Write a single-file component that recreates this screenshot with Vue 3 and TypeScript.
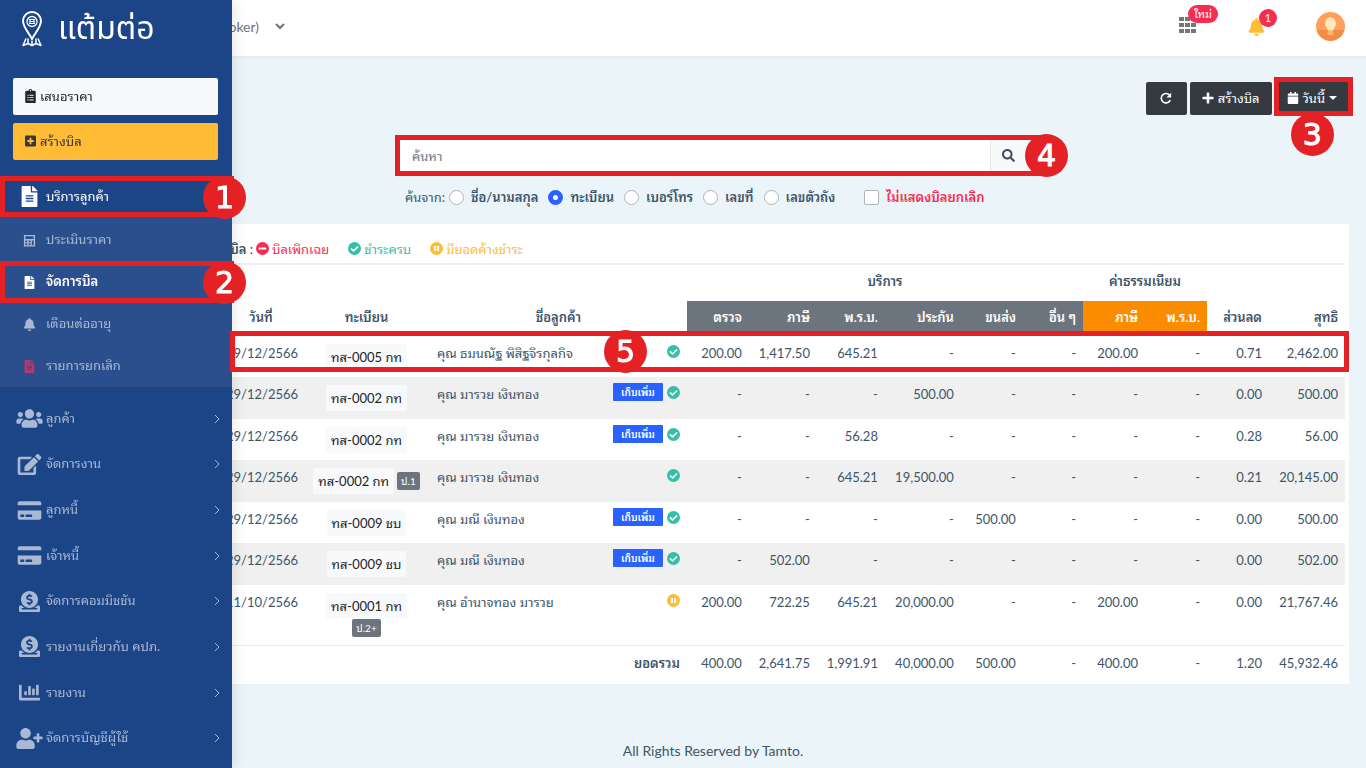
<script setup lang="ts">
import { ref } from 'vue'

interface Icon { box: string; d: string }

const icons: Record<string, Icon> = {
  file: { box: '0 0 384 512', d: 'M224 136V0H24C10.7 0 0 10.7 0 24v464c0 13.3 10.7 24 24 24h336c13.3 0 24-10.7 24-24V160H248c-13.2 0-24-10.8-24-24zm64 236c0 6.6-5.4 12-12 12H108c-6.6 0-12-5.4-12-12v-8c0-6.6 5.4-12 12-12h168c6.6 0 12 5.4 12 12v8zm0-64c0 6.6-5.4 12-12 12H108c-6.6 0-12-5.4-12-12v-8c0-6.6 5.4-12 12-12h168c6.6 0 12 5.4 12 12v8zm0-72v8c0 6.6-5.4 12-12 12H108c-6.6 0-12-5.4-12-12v-8c0-6.6 5.4-12 12-12h168c6.6 0 12 5.4 12 12zm96-114.1v6.1H256V0h6.1c6.4 0 12.5 2.5 17 7l97.9 98c4.5 4.5 7 10.6 7 16.9z' },
  bell: { box: '0 0 448 512', d: 'M224 512c35.32 0 63.97-28.65 63.97-64H160.03c0 35.35 28.65 64 63.97 64zm215.39-149.71c-19.32-20.76-55.47-51.99-55.47-154.29 0-77.7-54.48-139.9-127.94-155.16V32c0-17.67-14.32-32-31.98-32s-31.98 14.33-31.98 32v20.84C118.56 68.1 64.08 130.3 64.08 208c0 102.3-36.15 133.53-55.47 154.29-6 6.45-8.66 14.16-8.61 21.71.11 16.4 12.98 32 32.1 32h383.8c19.12 0 32-15.6 32.1-32 .05-7.55-2.61-15.27-8.61-21.71z' },
  users: { box: '0 0 640 512', d: 'M96 224c35.3 0 64-28.7 64-64s-28.7-64-64-64-64 28.7-64 64 28.7 64 64 64zm448 0c35.3 0 64-28.7 64-64s-28.7-64-64-64-64 28.7-64 64 28.7 64 64 64zm32 32h-64c-17.6 0-33.5 7.1-45.1 18.6 40.3 22.1 68.9 62 75.1 109.4h66c17.7 0 32-14.3 32-32v-32c0-35.3-28.7-64-64-64zm-256 0c61.9 0 112-50.1 112-112S381.9 32 320 32 208 82.1 208 144s50.1 112 112 112zm76.8 32h-8.3c-20.8 10-43.9 16-68.5 16s-47.6-6-68.5-16h-8.3C179.6 288 128 339.6 128 403.2V432c0 26.5 21.5 48 48 48h288c26.5 0 48-21.5 48-48v-28.8c0-63.6-51.6-115.2-115.2-115.2zm-223.7-13.4C161.5 263.1 145.6 256 128 256H64c-35.3 0-64 28.7-64 64v32c0 17.7 14.3 32 32 32h65.9c6.3-47.4 34.9-87.3 75.2-109.4z' },
  userPlus: { box: '0 0 640 512', d: 'M624 208h-64v-64c0-8.8-7.2-16-16-16h-32c-8.8 0-16 7.2-16 16v64h-64c-8.8 0-16 7.2-16 16v32c0 8.8 7.2 16 16 16h64v64c0 8.8 7.2 16 16 16h32c8.8 0 16-7.2 16-16v-64h64c8.8 0 16-7.2 16-16v-32c0-8.8-7.2-16-16-16zm-400 48c70.7 0 128-57.3 128-128S294.7 0 224 0 96 57.3 96 128s57.3 128 128 128zm89.6 32h-16.7c-22.2 10.2-46.9 16-72.9 16s-50.6-5.8-72.9-16h-16.7C60.2 288 0 348.2 0 422.4V464c0 26.5 21.5 48 48 48h352c26.5 0 48-21.5 48-48v-41.6c0-74.2-60.2-134.4-134.4-134.4z' },
  edit: { box: '0 0 576 512', d: 'M402.6 83.2l90.2 90.2c3.8 3.8 3.8 10 0 13.8L274.4 405.6l-92.8 10.3c-12.4 1.4-22.9-9.1-21.5-21.5l10.3-92.8L388.8 83.2c3.8-3.8 10-3.8 13.8 0zm162-22.9l-48.8-48.8c-15.2-15.2-39.9-15.2-55.2 0l-35.4 35.4c-3.8 3.8-3.8 10 0 13.8l90.2 90.2c3.8 3.8 10 3.8 13.8 0l35.4-35.4c15.2-15.3 15.2-40 0-55.2zM384 346.2V448H64V128h229.8c3.2 0 6.2-1.3 8.5-3.5l40-40c7.6-7.6 2.2-20.5-8.5-20.5H48C21.5 64 0 85.5 0 112v352c0 26.5 21.5 48 48 48h352c26.5 0 48-21.5 48-48V306.2c0-10.7-12.9-16-20.5-8.5l-40 40c-2.2 2.3-3.5 5.3-3.5 8.5z' },
  card: { box: '0 0 576 512', d: 'M0 432c0 26.5 21.5 48 48 48h480c26.5 0 48-21.5 48-48V256H0v176zm192-68c0-6.6 5.4-12 12-12h136c6.6 0 12 5.4 12 12v40c0 6.6-5.4 12-12 12H204c-6.6 0-12-5.4-12-12v-40zm-128 0c0-6.6 5.4-12 12-12h72c6.6 0 12 5.4 12 12v40c0 6.6-5.4 12-12 12H76c-6.6 0-12-5.4-12-12v-40zM576 80v48H0V80c0-26.5 21.5-48 48-48h480c26.5 0 48 21.5 48 48z' },
  donate: { box: '0 0 512 512', d: 'M256 416c114.9 0 208-93.1 208-208S370.9 0 256 0 48 93.1 48 208s93.1 208 208 208zM233.8 97.4V80.6c0-9.2 7.4-16.6 16.6-16.6h11.1c9.2 0 16.6 7.4 16.6 16.6v17c15.5.8 30.5 6.1 43 15.4 5.6 4.1 6.2 12.3 1.2 17.1L306 145.6c-3.8 3.7-9.5 3.8-14 1-5.4-3.4-11.4-5.1-17.8-5.1h-38.9c-9 0-16.3 8.2-16.3 18.3 0 8.2 5 15.5 12.1 17.6l62.3 18.7c25.7 7.7 43.7 32.4 43.7 60.1 0 34-26.4 61.5-59.1 62.4v16.8c0 9.2-7.4 16.6-16.6 16.6h-11.1c-9.2 0-16.6-7.4-16.6-16.6v-17c-15.5-.8-30.5-6.1-43-15.4-5.6-4.1-6.2-12.3-1.2-17.1l16.3-15.5c3.8-3.7 9.5-3.8 14-1 5.4 3.4 11.4 5.1 17.8 5.1h38.9c9 0 16.3-8.2 16.3-18.3 0-8.2-5-15.5-12.1-17.6l-62.3-18.7c-25.7-7.7-43.7-32.4-43.7-60.1.1-34 26.4-61.5 59.1-62.4zM480 352h-32.5c-19.6 26-44.6 47.7-73 64h63.8c5.3 0 9.6 3.6 9.6 8v16c0 4.4-4.3 8-9.6 8H73.6c-5.3 0-9.6-3.6-9.6-8v-16c0-4.4 4.3-8 9.6-8h63.8c-28.4-16.3-53.3-38-73-64H32c-17.7 0-32 14.3-32 32v96c0 17.7 14.3 32 32 32h448c17.7 0 32-14.3 32-32v-96c0-17.7-14.3-32-32-32z' },
  chart: { box: '0 0 512 512', d: 'M332.8 320h38.4c6.4 0 12.8-6.4 12.8-12.8V172.8c0-6.4-6.4-12.8-12.8-12.8h-38.4c-6.4 0-12.8 6.4-12.8 12.8v134.4c0 6.4 6.4 12.8 12.8 12.8zm96 0h38.4c6.4 0 12.8-6.4 12.8-12.8V76.8c0-6.4-6.4-12.8-12.8-12.8h-38.4c-6.4 0-12.8 6.4-12.8 12.8v230.4c0 6.4 6.4 12.8 12.8 12.8zm-288 0h38.4c6.4 0 12.8-6.4 12.8-12.8v-70.4c0-6.4-6.4-12.8-12.8-12.8h-38.4c-6.4 0-12.8 6.4-12.8 12.8v70.4c0 6.4 6.4 12.8 12.8 12.8zm96 0h38.4c6.4 0 12.8-6.4 12.8-12.8V108.8c0-6.4-6.4-12.8-12.8-12.8h-38.4c-6.4 0-12.8 6.4-12.8 12.8v198.4c0 6.4 6.4 12.8 12.8 12.8zM496 384H64V80c0-8.84-7.16-16-16-16H16C7.16 64 0 71.16 0 80v336c0 17.67 14.33 32 32 32h464c8.84 0 16-7.16 16-16v-32c0-8.84-7.16-16-16-16z' },
  search: { box: '0 0 512 512', d: 'M505 442.7L405.3 343c-4.5-4.5-10.6-7-17-7H372c27.6-35.3 44-79.7 44-128C416 93.1 322.9 0 208 0S0 93.1 0 208s93.1 208 208 208c48.3 0 92.7-16.4 128-44v16.3c0 6.4 2.5 12.5 7 17l99.7 99.7c9.4 9.4 24.6 9.4 33.9 0l28.3-28.3c9.4-9.4 9.4-24.6.1-34zM208 336c-70.7 0-128-57.2-128-128 0-70.7 57.2-128 128-128 70.7 0 128 57.2 128 128 0 70.7-57.2 128-128 128z' },
  calendar: { box: '0 0 448 512', d: 'M12 192h424c6.6 0 12 5.4 12 12v260c0 26.5-21.5 48-48 48H48c-26.5 0-48-21.5-48-48V204c0-6.6 5.4-12 12-12zm436-44v-36c0-26.5-21.5-48-48-48h-48V12c0-6.6-5.4-12-12-12h-40c-6.6 0-12 5.4-12 12v52H160V12c0-6.6-5.4-12-12-12h-40c-6.6 0-12 5.4-12 12v52H48C21.5 64 0 85.5 0 112v36c0 6.6 5.4 12 12 12h424c6.6 0 12-5.4 12-12z' },
  plus: { box: '0 0 14 14', d: 'M5.5 1.5a1 1 0 0 1 1-1h1a1 1 0 0 1 1 1v4h4a1 1 0 0 1 1 1v1a1 1 0 0 1-1 1h-4v4a1 1 0 0 1-1 1h-1a1 1 0 0 1-1-1v-4h-4a1 1 0 0 1-1-1v-1a1 1 0 0 1 1-1h4z' },
  plusSquare: { box: '0 0 12 12', d: 'M1.5 0h9A1.5 1.5 0 0 1 12 1.5v9a1.5 1.5 0 0 1-1.5 1.5h-9A1.5 1.5 0 0 1 0 10.5v-9A1.5 1.5 0 0 1 1.5 0zM5 2.500V5H2.500v2H5v2.500h2V7h2.500V5H7V2.500z' },
  clipboard: { box: '0 0 384 512', d: 'M336 64h-80c0-35.3-28.7-64-64-64s-64 28.7-64 64H48C21.5 64 0 85.5 0 112v352c0 26.5 21.5 48 48 48h288c26.5 0 48-21.5 48-48V112c0-26.5-21.5-48-48-48zM80 208h40v40H80zm0 88h40v40H80zm0 88h40v40H80zM192 40a24 24 0 1 1 0 48 24 24 0 0 1 0-48zM152 212h152v32H152zm0 88h152v32H152zm0 88h152v32H152z' },
  calculator: { box: '0 0 14 14', d: 'M1 1h12v12.5H1zM2.500 2.500v3h9v-3zM2.500 7v2h2V7zM6 7v2h2V7zM9.500 7v5h2V7zM2.500 10v2h2v-2zM6 10v2h2v-2z' },
  check: { box: '0 0 14 14', d: 'M7 0a7 7 0 1 1 0 14A7 7 0 0 1 7 0zM3.700 6.200L2.500 7.500l3.500 3.400 5.500-5.400-1.300-1.300L6 8.400z' },
  minus: { box: '0 0 14 14', d: 'M7 0a7 7 0 1 1 0 14A7 7 0 0 1 7 0zM3 5.800v2.400h8V5.800z' },
  pause: { box: '0 0 14 14', d: 'M7 0a7 7 0 1 1 0 14A7 7 0 0 1 7 0zM4.200 4.300v5.400h2.200V4.300zM7.600 4.300v5.400h2.200V4.300z' },
}

const subItems = [
  { label: 'ประเมินราคา', icon: 'calculator', tone: '' },
  { label: 'จัดการบิล', icon: 'file', tone: 'active' },
  { label: 'เตือนต่ออายุ', icon: 'bell', tone: '' },
  { label: 'รายการยกเลิก', icon: 'file', tone: 'cancel' },
]

const menuItems = [
  { label: 'ลูกค้า', icon: 'users' },
  { label: 'จัดการงาน', icon: 'edit' },
  { label: 'ลูกหนี้', icon: 'card' },
  { label: 'เจ้าหนี้', icon: 'card' },
  { label: 'จัดการคอมมิชชัน', icon: 'donate' },
  { label: 'รายงานเกี่ยวกับ คปภ.', icon: 'donate' },
  { label: 'รายงาน', icon: 'chart' },
  { label: 'จัดการบัญชีผู้ใช้', icon: 'userPlus' },
]

const searchFields = ['ชื่อ/นามสกุล', 'ทะเบียน', 'เบอร์โทร', 'เลขที่', 'เลขตัวถัง']
const searchBy = ref('ทะเบียน')
const keyword = ref('')
const hideCancelled = ref(false)

const legend = [
  { label: 'บิลเพิกเฉย', icon: 'minus' },
  { label: 'ชำระครบ', icon: 'check' },
  { label: 'มียอดค้างชำระ', icon: 'pause' },
]

const columns = [
  { label: 'ตรวจ', tone: 'service' },
  { label: 'ภาษี', tone: 'service' },
  { label: 'พ.ร.บ.', tone: 'service' },
  { label: 'ประกัน', tone: 'service' },
  { label: 'ขนส่ง', tone: 'service' },
  { label: 'อื่น ๆ', tone: 'service' },
  { label: 'ภาษี', tone: 'fee' },
  { label: 'พ.ร.บ.', tone: 'fee' },
  { label: 'ส่วนลด', tone: '' },
  { label: 'สุทธิ', tone: '' },
]

interface Bill {
  date: string
  plate: string
  tag?: string
  name: string
  more: boolean
  status: 'check' | 'pause'
  values: string[]
}

const bills: Bill[] = [
  { date: '29/12/2566', plate: 'ทส-0005 กท', name: 'คุณ ธมนณัฐ พิสิฐจิรกุลกิจ', more: false, status: 'check', values: ['200.00', '1,417.50', '645.21', '-', '-', '-', '200.00', '-', '0.71', '2,462.00'] },
  { date: '29/12/2566', plate: 'ทส-0002 กท', name: 'คุณ มารวย เงินทอง', more: true, status: 'check', values: ['-', '-', '-', '500.00', '-', '-', '-', '-', '0.00', '500.00'] },
  { date: '29/12/2566', plate: 'ทส-0002 กท', name: 'คุณ มารวย เงินทอง', more: true, status: 'check', values: ['-', '-', '56.28', '-', '-', '-', '-', '-', '0.28', '56.00'] },
  { date: '29/12/2566', plate: 'ทส-0002 กท', tag: 'ป.1', name: 'คุณ มารวย เงินทอง', more: false, status: 'check', values: ['-', '-', '645.21', '19,500.00', '-', '-', '-', '-', '0.21', '20,145.00'] },
  { date: '29/12/2566', plate: 'ทส-0009 ชบ', name: 'คุณ มณี เงินทอง', more: true, status: 'check', values: ['-', '-', '-', '-', '500.00', '-', '-', '-', '0.00', '500.00'] },
  { date: '29/12/2566', plate: 'ทส-0009 ชบ', name: 'คุณ มณี เงินทอง', more: true, status: 'check', values: ['-', '502.00', '-', '-', '-', '-', '-', '-', '0.00', '502.00'] },
  { date: '11/10/2566', plate: 'ทส-0001 กท', tag: 'ป.2+', name: 'คุณ อำนาจทอง มารวย', more: false, status: 'pause', values: ['200.00', '722.25', '645.21', '20,000.00', '-', '-', '200.00', '-', '0.00', '21,767.46'] },
]

const totals = ['400.00', '2,641.75', '1,991.91', '40,000.00', '500.00', '-', '400.00', '-', '1.20', '45,932.46']
</script>

<template>
  <div class="page">
    <aside class="sidebar">
      <a class="brand" href="#">
        <svg class="brand-mark" viewBox="0 0 22 36" stroke="currentColor" aria-hidden="true">
          <path d="M11 28C8 22 2 16 2 10a9 9 0 0 1 18 0c0 6-6 12-9 18z" stroke-width="2" />
          <circle cx="11" cy="10.5" r="5" stroke-width="1.3" />
          <path d="M8 8.500h6M8.500 10.500h5M9 8.500v4h4v-4M8 12.500h6" stroke-width="1" />
          <path d="M5 27.500L2 34.500l5-2 4 2 4-2 5 2-3-7M7 27.500v5M15 27.500v5M11 30v4.500" stroke-width="1.5" stroke-linejoin="round" />
        </svg>
        <span>แต้มต่อ</span>
      </a>
      <div class="quick">
        <button type="button" class="quick-btn light">
          <svg class="q-icon" :viewBox="icons.clipboard.box"><path :d="icons.clipboard.d" fill-rule="evenodd" /></svg>เสนอราคา
        </button>
        <button type="button" class="quick-btn amber">
          <svg class="q-icon" :viewBox="icons.plusSquare.box"><path :d="icons.plusSquare.d" fill-rule="evenodd" /></svg>สร้างบิล
        </button>
      </div>
      <nav class="nav">
        <a class="nav-link open marked" href="#">
          <svg class="n-icon" :viewBox="icons.file.box"><path :d="icons.file.d" /></svg>
          <span>บริการลูกค้า</span>
          <b class="step step-side">1</b>
        </a>
        <div class="sub">
          <a v-for="s in subItems" :key="s.label" class="sub-link" :class="[s.tone, { marked: s.tone === 'active' }]" href="#">
            <svg class="s-icon" :viewBox="icons[s.icon].box"><path :d="icons[s.icon].d" fill-rule="evenodd" /></svg>
            <span>{{ s.label }}</span>
            <b v-if="s.tone === 'active'" class="step step-side">2</b>
          </a>
        </div>
        <div class="menu">
          <a v-for="m in menuItems" :key="m.label" class="nav-link" href="#">
            <svg class="n-icon" :viewBox="icons[m.icon].box"><path :d="icons[m.icon].d" /></svg>
            <span>{{ m.label }}</span>
            <svg class="chev" viewBox="0 0 6 10"><path d="M1 1l4 4-4 4" fill="none" stroke="currentColor" /></svg>
          </a>
        </div>
      </nav>
    </aside>

    <header class="topbar">
      <button type="button" class="account">
        <span>(Broker)</span>
        <svg viewBox="0 0 10 7"><path d="M1 1l4 4 4-4" fill="none" stroke="currentColor" stroke-width="2" /></svg>
      </button>
      <div class="top-actions">
        <button type="button" class="top-btn" aria-label="Apps">
          <svg class="grid-icon" viewBox="0 0 18 16">
            <path d="M0 0h5v4H0zM6 0h5v4H6zM12 0h5v4h-5zM0 6h5v4H0zM6 6h5v4H6zM12 6h5v4h-5zM0 12h5v4H0zM6 12h5v4H6zM12 12h5v4h-5z" />
          </svg>
          <span class="count wide">ใหม่</span>
        </button>
        <button type="button" class="top-btn" aria-label="Notifications">
          <svg class="bell-icon" :viewBox="icons.bell.box"><path :d="icons.bell.d" /></svg>
          <span class="count">1</span>
        </button>
        <button type="button" class="avatar" aria-label="Profile">
          <svg viewBox="0 0 30 30">
            <circle cx="15" cy="15" r="15" fill="#ffa05c" />
            <path d="M.8 18.500h28.400a14.600 14.600 0 0 1-28.400 0z" fill="#f28a48" />
            <path d="M12 17h6v7h-6z" fill="#f7b46c" />
            <path d="M15 5.500a5.500 6.500 0 0 1 5.500 6.300c0 3.500-2.300 5-3 7.200h-5c-.7-2.200-3-3.700-3-7.200A5.500 6.500 0 0 1 15 5.500z" fill="#ffe9b8" />
          </svg>
        </button>
      </div>
    </header>

    <main class="main">
      <div class="toolbar">
        <button type="button" class="dark-btn" aria-label="Refresh">
          <svg class="t-icon" viewBox="0 0 14 14">
            <path d="M12 9.500A5.500 5.500 0 1 1 11.500 4" fill="none" stroke="currentColor" stroke-width="1.8" />
            <path d="M13 1v5.500H7.500z" />
          </svg>
        </button>
        <button type="button" class="dark-btn">
          <svg class="t-icon" :viewBox="icons.plus.box"><path :d="icons.plus.d" /></svg>สร้างบิล
        </button>
        <button type="button" class="dark-btn marked">
          <svg class="t-icon" :viewBox="icons.calendar.box"><path :d="icons.calendar.d" /></svg>วันนี้
          <svg class="caret" viewBox="0 0 8 4"><path d="M0 0h8L4 4z" /></svg>
          <b class="step step-below">3</b>
        </button>
      </div>

      <form class="finder" @submit.prevent>
        <div class="search marked">
          <input v-model="keyword" type="search" placeholder="ค้นหา" aria-label="ค้นหา" />
          <button type="submit" aria-label="ค้นหา">
            <svg :viewBox="icons.search.box"><path :d="icons.search.d" /></svg>
          </button>
          <b class="step step-end">4</b>
        </div>
        <div class="filters">
          <span>ค้นจาก:</span>
          <label v-for="f in searchFields" :key="f">
            <input v-model="searchBy" type="radio" name="search-by" :value="f" />{{ f }}
          </label>
          <label class="hide-cancelled">
            <input v-model="hideCancelled" type="checkbox" />ไม่แสดงบิลยกเลิก
          </label>
        </div>
      </form>

      <section class="card">
        <div class="legend">
          <span class="legend-title">สถานะบิล :</span>
          <span v-for="l in legend" :key="l.label" class="legend-item" :class="l.icon">
            <svg class="dot" :viewBox="icons[l.icon].box"><path :d="icons[l.icon].d" fill-rule="evenodd" /></svg>{{ l.label }}
          </span>
        </div>
        <table>
          <colgroup>
            <col class="w-lead" /><col class="w-date" /><col class="w-plate" /><col />
            <col class="w-s" /><col class="w-m" /><col class="w-m" /><col class="w-l" /><col class="w-s" />
            <col class="w-xs" /><col class="w-s" /><col class="w-s" /><col class="w-s" /><col class="w-l" />
          </colgroup>
          <thead>
            <tr class="groups">
              <td colspan="4"></td>
              <th colspan="6" scope="colgroup">บริการ</th>
              <th colspan="2" scope="colgroup">ค่าธรรมเนียม</th>
              <td colspan="2"></td>
            </tr>
            <tr class="heads">
              <td></td>
              <th scope="col">วันที่</th>
              <th scope="col">ทะเบียน</th>
              <th scope="col">ชื่อลูกค้า</th>
              <th v-for="(c, i) in columns" :key="i" scope="col" class="num" :class="c.tone">{{ c.label }}</th>
            </tr>
          </thead>
          <tbody>
            <tr v-for="(b, i) in bills" :key="i">
              <td></td>
              <td class="num">{{ b.date }}</td>
              <td class="plate-cell">
                <div class="plates">
                  <span class="plate">{{ b.plate }}</span>
                  <span v-if="b.tag" class="tag">{{ b.tag }}</span>
                </div>
              </td>
              <td class="name">
                <div class="name-row">
                  <span>{{ b.name }}</span>
                  <span class="state">
                    <button v-if="b.more" type="button" class="more">เก็บเพิ่ม</button>
                    <svg class="dot" :class="b.status" :viewBox="icons[b.status].box"><path :d="icons[b.status].d" fill-rule="evenodd" /></svg>
                  </span>
                </div>
              </td>
              <td v-for="(v, j) in b.values" :key="j" class="num">{{ v }}</td>
            </tr>
          </tbody>
          <tfoot>
            <tr>
              <td colspan="3"></td>
              <th scope="row" class="num">ยอดรวม</th>
              <td v-for="(v, j) in totals" :key="j" class="num">{{ v }}</td>
            </tr>
          </tfoot>
        </table>
        <div class="row-mark"><b class="step step-row">5</b></div>
      </section>

      <footer class="footer">All Rights Reserved by Tamto.</footer>
    </main>
  </div>
</template>

<style>
body {
  margin: 0;
  background: #ebf4f8;
}
</style>

<style scoped>
.page {
  --red: #e42225;
  --ink: #3e5569;
  min-height: 100vh;
  display: flex;
  flex-direction: column;
  color: var(--ink);
  font: 13px/20px Lato, "Noto Sans Thai Looped", "Noto Looped Thai", Loma, Waree, Garuda, "Noto Sans Thai", sans-serif;
  overflow: hidden;
}
.page *, .page *::before, .page *::after { box-sizing: border-box; }
button, input { font: inherit; color: inherit; }
button { cursor: pointer; border: 0; }
a { color: inherit; text-decoration: none; }
svg { fill: currentColor; flex: none; display: block; }

/* numbered call-outs */
.marked { position: relative; }
.marked::after, .row-mark {
  content: "";
  position: absolute;
  border: 5px solid var(--red);
  pointer-events: none;
}
.step {
  position: absolute;
  z-index: 2;
  width: 43px;
  height: 43px;
  border-radius: 50%;
  background: var(--red);
  color: #fff;
  font: 400 30px/43px "DejaVu Sans", sans-serif;
  -webkit-text-stroke: 1px #fff;
  text-align: center;
}

/* sidebar */
.sidebar {
  position: fixed;
  z-index: 10;
  top: 0;
  bottom: 0;
  left: 0;
  width: 232px;
  display: flex;
  flex-direction: column;
  background: #1c4588;
  color: #a9b8d4;
  box-shadow: 2px 0 12px rgba(0, 0, 0, 0.1);
}
.brand {
  height: 57px;
  display: flex;
  align-items: center;
  gap: 15px;
  padding-left: 21px;
  color: #fff;
  font: 32px/40px "Noto Sans Thai", "Noto Sans", sans-serif;
}
.brand-mark { width: 22px; height: 36px; fill: none; }
.quick {
  display: grid;
  gap: 8px;
  padding: 21px 14px 16px 13px;
}
.quick-btn {
  height: 37px;
  display: flex;
  align-items: center;
  gap: 4px;
  padding: 0 12px 2px;
  border-radius: 2px;
  color: #212529;
}
.light { background: #f8f9fa; }
.amber { background: #ffbc34; color: #343a40; }
.q-icon { width: 11px; height: 14px; }
.nav { flex: 1; display: flex; flex-direction: column; }
.nav-link, .sub-link {
  display: flex;
  align-items: center;
  padding-right: 12px;
}
.nav-link { padding-left: 16px; gap: 3px; }
.n-icon { width: 27px; height: 21px; }
.open { height: 41px; color: #fff; }
.nav-link span, .sub-link span { flex: 1; padding-bottom: 2px; }
.chev { width: 6px; height: 10px; }
.sub { background: #2b4f8d; padding: 2px 0 0; }
.sub-link { height: 42px; padding-left: 22px; gap: 9px; }
.s-icon { width: 15px; height: 13px; }
.active { color: #fff; font-weight: 600; }
.cancel svg { color: #b03a6d; }
.menu {
  flex: 1;
  display: grid;
  grid-auto-rows: 1fr;
  padding: 9px 0 7px;
}
.sidebar .marked::after { inset: 0 -2px 0 0; }
.step-side { right: -14px; top: 50%; margin-top: -21px; }

/* top bar */
.topbar {
  height: 56px;
  display: flex;
  align-items: center;
  justify-content: space-between;
  padding: 0 21px 3px 211px;
  background: #fff;
  box-shadow: 0 1px 4px rgba(0, 0, 0, 0.06);
}
.account {
  display: flex;
  align-items: center;
  gap: 16px;
  padding: 0;
  background: none;
  color: #6f7479;
  font-size: 14px;
}
.account svg { width: 10px; height: 7px; }
.top-actions { display: flex; align-items: center; gap: 51px; }
.top-btn, .avatar { position: relative; padding: 0; background: none; }
.grid-icon { width: 18px; height: 16px; margin-bottom: 3px; color: #777; }
.bell-icon { width: 17px; height: 18px; color: #ffbc34; }
.avatar svg { width: 29px; height: 29px; }
.count {
  position: absolute;
  left: 11px;
  bottom: 9px;
  min-width: 18px;
  height: 18px;
  border-radius: 9px;
  background: #f62d51;
  color: #fff;
  font-size: 11px;
  line-height: 18px;
}
.wide { width: 30px; left: 9px; bottom: 13px; }

/* main */
.main {
  flex: 1;
  display: flex;
  flex-direction: column;
  padding: 26px 17px 7px 77px;
}
.toolbar { display: flex; justify-content: flex-end; gap: 3px; }
.dark-btn {
  height: 33px;
  display: flex;
  align-items: center;
  justify-content: center;
  gap: 4px;
  min-width: 41px;
  padding: 0 12px 2px;
  border-radius: 2px;
  background: #343a40;
  color: #fff;
}
.t-icon { width: 12px; height: 12px; }
.caret { width: 8px; height: 4px; }
.dark-btn.marked::after { inset: -5px -4px -1px -1px; }
.step-below { top: 31px; left: 50%; margin-left: -21px; }
.finder { width: 626px; max-width: 100%; margin: 25px auto 0; }
.search { height: 31px; display: flex; }
.search input {
  flex: 1;
  min-width: 0;
  padding: 0 12px;
  border: 0;
  background: #fff;
  outline: 0;
}
.search input::placeholder { color: #6c757d; opacity: 1; }
.search button {
  width: 36px;
  display: grid;
  place-items: center;
  padding: 0;
  border-left: 1px solid #e4e8ec;
  background: #f8f9fa;
  color: #454d5d;
}
.search button svg { width: 13px; height: 13px; }
.search.marked::after { inset: -5px -15px -5px -5px; }
.step-end { right: -42px; top: -6px; }
.filters {
  display: flex;
  align-items: center;
  gap: 10px;
  height: 20px;
  margin-top: 16px;
  padding-left: 5px;
  white-space: nowrap;
}
.filters span { margin-right: -6px; }
.filters label { display: flex; align-items: center; gap: 7px; font-weight: 600; }
.filters input {
  appearance: none;
  width: 15px;
  height: 15px;
  margin: 0;
  border: 1px solid #adb5bd;
  border-radius: 50%;
  background: #fff;
}
.filters input:checked { border: 5px solid #2962ff; }
.filters input[type="checkbox"] { border-radius: 2px; }
.filters .hide-cancelled { margin-left: 19px; color: #f62d51; }

.card {
  position: relative;
  margin-top: 17px;
  padding: 0 4px;
  background: #fff;
}
.legend {
  height: 41px;
  display: flex;
  align-items: center;
  gap: 19px;
  padding: 10px 0 0 108px;
  border-bottom: 2px solid #eceef0;
}
.legend-title { width: 64px; display: flex; justify-content: flex-end; margin-right: -16px; font-weight: 600; white-space: nowrap; }
.legend-item { display: flex; align-items: center; gap: 3px; }
.dot { width: 13px; height: 13px; }
.check { color: #36bea6; }
.minus { color: #f62d51; }
.pause { color: #ffbc34; }

table { width: 100%; table-layout: fixed; border-collapse: separate; border-spacing: 0; }
.w-lead { width: 138px; }
.w-date { width: 84px; }
.w-plate { width: 127px; }
.w-xs { width: 60px; }
.w-s { width: 62px; }
.w-m { width: 68px; }
.w-l { width: 76px; }
td, th { padding: 0 7px; white-space: nowrap; }
th { font-weight: 600; text-align: center; }
.num { text-align: right; }
.groups { height: 36px; }
.groups th { padding-bottom: 4px; }
.heads { height: 35px; }
.heads th { border-bottom: 4px solid #fff; }
.service { background: #6c757d; color: #fff; }
.fee { background: #fb8c00; color: #fff; }
tbody tr { height: 41px; vertical-align: top; }
tbody tr:nth-child(even) { height: 42px; background: #f0f0f0; }
tbody tr:last-child { height: 60px; }
tbody td { padding-top: 7px; }
tbody .plate-cell { padding: 8px 8px 0; }
.plates { display: flex; flex-wrap: wrap; align-items: center; justify-content: center; gap: 0 3px; }
.plate {
  padding: 0 5px;
  border-radius: 2px;
  background: #f8f9fa;
  color: #212529;
  line-height: 26px;
}
.tag {
  padding: 0 4px;
  border-radius: 2px;
  background: #6c757d;
  color: #fff;
  font-size: 10px;
  line-height: 18px;
}
.name-row { display: flex; justify-content: space-between; }
.state { display: flex; align-items: center; gap: 4px; height: 16px; }
.more {
  width: 50px;
  height: 18px;
  padding: 0;
  border-radius: 1px;
  background: #2962ff;
  color: #fff;
  font-size: 10px;
  font-weight: 600;
  line-height: 18px;
}
tfoot tr { height: 39px; }
tfoot td, tfoot th { padding-bottom: 4px; border-top: 1px solid #e9ecef; }
.row-mark { z-index: 20; top: 107px; left: 153px; right: 0; height: 41px; }
.step-row { top: -6px; left: 369px; }

.footer { margin-top: auto; font-size: 14px; text-align: center; }
</style>
